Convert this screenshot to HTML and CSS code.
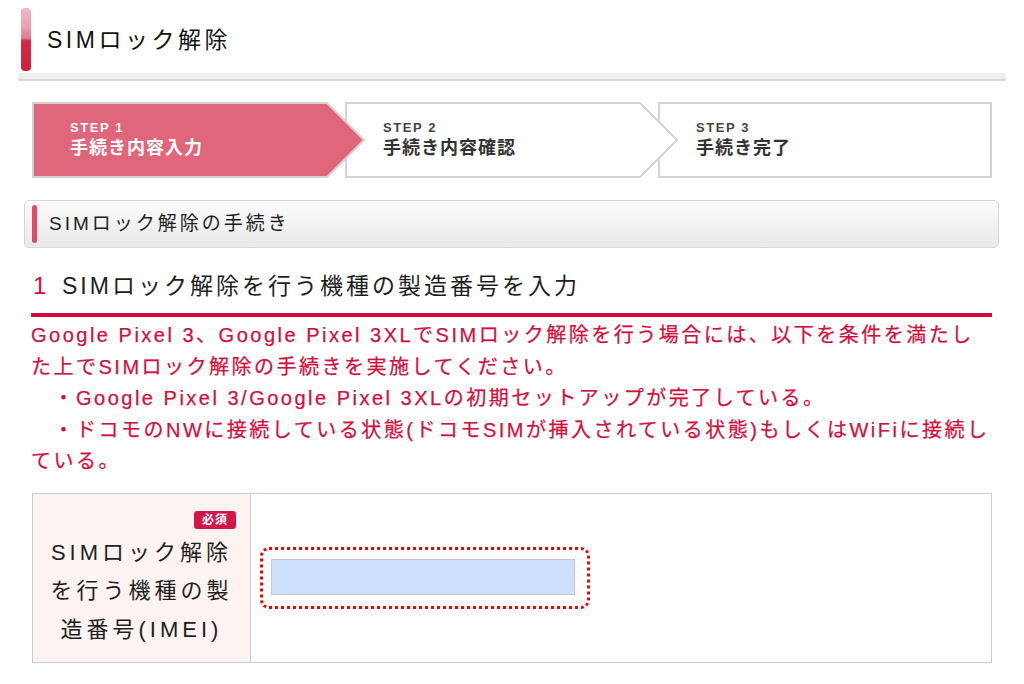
FILE: index.html
```html
<!DOCTYPE html>
<html lang="ja">
<head>
<meta charset="utf-8">
<title>SIMロック解除</title>
<link rel="stylesheet" href="styles.css">
</head>
<body>
<div class="page">
  <header class="title">
    <span class="title-bar"></span>
    <h1 class="title-text">SIMロック解除</h1>
  </header>
  <div class="title-rule"></div>

  <ol class="steps">
    <li class="step step-1 is-current">
      <svg class="step-shape" width="334" height="76" viewBox="0 0 334 76"><polygon points="1,1 295,1 332,38 295,75 1,75"/></svg>
      <span class="step-label">STEP 1</span>
      <span class="step-name">手続き内容入力</span>
    </li>
    <li class="step step-2">
      <svg class="step-shape" width="334" height="76" viewBox="0 0 334 76"><polygon points="1,1 295,1 332,38 295,75 1,75"/></svg>
      <span class="step-label">STEP 2</span>
      <span class="step-name">手続き内容確認</span>
    </li>
    <li class="step step-3">
      <svg class="step-shape" width="334" height="76" viewBox="0 0 334 76"><rect x="1" y="1" width="332" height="74"/></svg>
      <span class="step-label">STEP 3</span>
      <span class="step-name">手続き完了</span>
    </li>
  </ol>

  <div class="section-head">
    <span class="section-bar"></span>
    <h2 class="section-text">SIMロック解除の手続き</h2>
  </div>

  <h3 class="sub-head"><span class="sub-num">1</span>SIMロック解除を行う機種の製造番号を入力</h3>

  <div class="notice">
    <p>Google Pixel 3、Google Pixel 3XLでSIMロック解除を行う場合には、以下を条件を満たした上でSIMロック解除の手続きを実施してください。</p>
    <p>　・Google Pixel 3/Google Pixel 3XLの初期セットアップが完了している。</p>
    <p>　・ドコモのNWに接続している状態(ドコモSIMが挿入されている状態)もしくはWiFiに接続している。</p>
  </div>

  <table class="form-table">
    <tr>
      <th class="form-label">
        <span class="badge-row"><span class="badge">必須</span></span>
        <span class="label-text">SIMロック解除を行う機種の製造番号(IMEI)</span>
      </th>
      <td class="form-field">
        <div class="focus-ring"><input class="imei" type="text" aria-label="製造番号(IMEI)"></div>
      </td>
    </tr>
  </table>
</div>
</body>
</html>
```

FILE: styles.css
```css
html, body {
  margin: 0;
  padding: 0;
  background: #ffffff;
}

body {
  font-family: "Liberation Sans", "Noto Sans CJK JP", sans-serif;
  color: #1e1e1e;
}

h1, h2, h3, p {
  margin: 0;
  font-weight: normal;
}

.page {
  width: 1024px;
}

/* Page title */
.title {
  display: flex;
  align-items: center;
  gap: 16px;
  height: 63px;
  padding: 8px 0 0 21px;
}

.title-bar {
  width: 10px;
  height: 63px;
  border-radius: 4px;
  background: linear-gradient(#f1b9c5 0%, #eaa0b2 30%, #e07a92 48%, #d42a4a 52%, #cc1f3e 100%);
}

.title-text {
  font-size: 23px;
  letter-spacing: 3.5px;
  color: #111;
  line-height: 30px;
}

.title-rule {
  margin: 2px 18px 0 18px;
  height: 6px;
  background: #efefef;
  border-bottom: 2px solid #dadada;
}

/* Steps */
.steps {
  list-style: none;
  margin: 21px 32px 0 32px;
  padding: 0;
  display: grid;
  grid-template-columns: 313px 313px 1fr;
  height: 76px;
}

.step {
  position: relative;
  display: flex;
  flex-direction: column;
  justify-content: center;
  padding-left: 38px;
  color: #333;
}

.step-1 { z-index: 3; }
.step-2 { z-index: 2; }
.step-3 { z-index: 1; }

.step-shape {
  position: absolute;
  left: 0;
  top: 0;
  overflow: visible;
}

.step-shape polygon,
.step-shape rect {
  fill: #ffffff;
  stroke: #d2d2d2;
  stroke-width: 2;
}

.is-current .step-shape polygon {
  fill: #e0667b;
  stroke: #d0d0d0;
}

.step-label,
.step-name {
  position: relative;
  z-index: 1;
}

.step-label {
  font-size: 13px;
  font-weight: bold;
  letter-spacing: 1.6px;
  line-height: 16px;
  color: #444;
}

.step-name {
  font-size: 18px;
  font-weight: bold;
  letter-spacing: 1px;
  line-height: 24px;
  color: #333;
}

.is-current .step-label,
.is-current .step-name {
  color: #ffffff;
}

/* Section header */
.section-head {
  display: flex;
  align-items: center;
  gap: 12px;
  margin: 22px 25px 0 24px;
  height: 46px;
  padding-left: 7px;
  border: 1px solid #d6d6d6;
  border-radius: 5px;
  background: linear-gradient(#fbfbfb, #e9e9e9);
}

.section-bar {
  width: 5px;
  height: 38px;
  border-radius: 3px;
  background: #e04a68;
}

.section-text {
  font-size: 19px;
  letter-spacing: 3px;
  color: #1e1e1e;
  line-height: 26px;
}

/* Sub heading */
.sub-head {
  margin: 20px 32px 0 31px;
  padding-bottom: 9px;
  border-bottom: 4px solid #d50c3c;
  font-size: 23px;
  letter-spacing: 3px;
  line-height: 36px;
  font-weight: normal;
  color: #1e1e1e;
}

.sub-num {
  display: inline-block;
  width: 31px;
  padding-left: 2px;
  box-sizing: border-box;
  font-size: 24px;
  color: #d50c3c;
  letter-spacing: 0;
}

/* Notice */
.notice {
  margin: 3px 0 0 31px;
  width: 960px;
  color: #d20f3d;
  font-size: 20px;
  letter-spacing: 2.5px;
  line-height: 31.5px;
  -webkit-text-stroke: 0.25px #d20f3d;
}

/* Form table */
.form-table {
  margin: 15px 32px 0 32px;
  width: 960px;
  border-collapse: collapse;
}

.form-label,
.form-field {
  border: 1px solid #cccccc;
}

.form-label {
  width: 189px;
  padding: 16px 14px 13px 14px;
  background: #fdf4f2;
  vertical-align: top;
  text-align: center;
  font-weight: normal;
}

.badge-row {
  display: block;
  text-align: right;
  height: 18px;
}

.badge {
  display: inline-block;
  width: 42px;
  height: 18px;
  line-height: 18px;
  border-radius: 3px;
  background: #d3164a;
  color: #ffffff;
  font-size: 12px;
  font-weight: bold;
  letter-spacing: 1px;
  text-align: center;
}

.label-text {
  display: block;
  margin-top: 6px;
  font-size: 22px;
  letter-spacing: 4px;
  line-height: 38.5px;
  color: #1e1e1e;
}

.form-field {
  padding: 0 0 0 9px;
  vertical-align: middle;
}

.focus-ring {
  display: inline-block;
  padding: 9px 12px 11px 8px;
  border: 3px dotted #f00000;
  border-radius: 9px;
}

.imei {
  display: block;
  box-sizing: border-box;
  width: 304px;
  height: 36px;
  margin: 0;
  border: 1px solid #c5c5c5;
  background: #cde0fb;
  outline: none;
}
```
